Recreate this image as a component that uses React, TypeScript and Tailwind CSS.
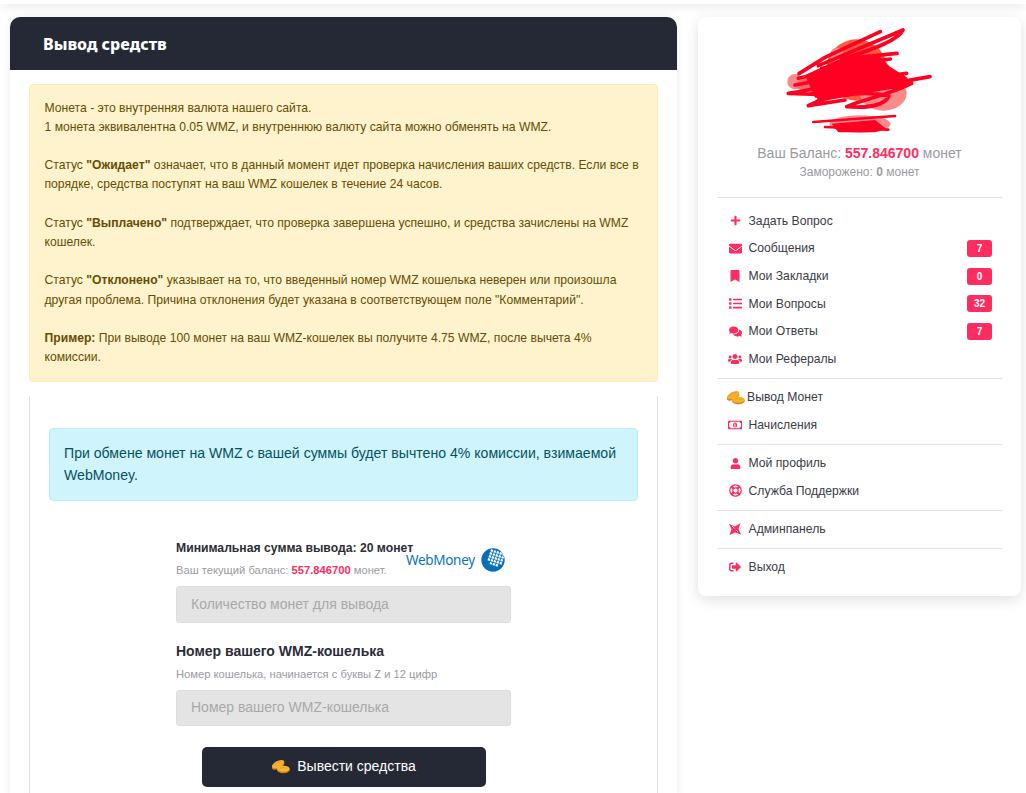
import { FaPlus, FaEnvelope, FaBookmark, FaList, FaComments, FaUsers, FaRegMoneyBillAlt, FaUser, FaRegLifeRing, FaSignOutAlt } from 'react-icons/fa'
import type { ReactNode } from 'react'

const sans = 'font-["Liberation_Sans",Arial,sans-serif]'

const Coins = ({ className }: { className: string }) => (
  <svg viewBox="0 0 20 15" className={className}>
    <ellipse cx="7.5" cy="6.2" rx="7.2" ry="3.6" transform="rotate(-28 7.5 6.2)" fill="#d9820f" />
    <ellipse cx="7.5" cy="5" rx="7" ry="3.4" transform="rotate(-28 7.5 5)" fill="#f7ae2f" />
    <ellipse cx="13" cy="11" rx="6.8" ry="3.6" fill="#d9820f" />
    <ellipse cx="13" cy="9.8" rx="6.6" ry="3.2" fill="#f9b534" />
    <path d="M9 9.6 C11 8.4 15 8.4 17 9.6" fill="none" stroke="#e8951a" strokeWidth="0.8" />
    <path d="M3.5 6 C5 3.8 8 2.2 11 1.8" fill="none" stroke="#e8951a" strokeWidth="0.8" />
  </svg>
)

const AdminIcon = () => (
  <svg viewBox="0 0 12 12" className="h-[12px] w-[12px]">
    <path d="M0 1 L6 3.5 L11.5 0 L9.5 6 L12 11.5 L6 9.5 L0.5 12 L2.5 6 Z" fill="#ff2d5f" />
    <path d="M3 3 L5.5 5.5 M9 9 L6.8 6.8" stroke="#fff" strokeWidth="0.7" />
  </svg>
)

const WebMoneyGlobe = () => {
  const cells = [0, 1, 2, 3, 4]
  return (
    <svg viewBox="0 0 24 24" className="h-[24px] w-[24px]">
      <circle cx="12" cy="12" r="11.7" fill="#0a6fb8" />
      <g transform="rotate(18 13 10)" fill="#fff">
        {cells.map((r) =>
          cells.map((c) =>
            r + c > 7 || (r === 4 && c === 0) ? null : (
              <rect key={`${r}-${c}`} x={7.5 + c * 3.1} y={2.5 + r * 3.1} width="2.3" height="2.3" />
            )
          )
        )}
      </g>
    </svg>
  )
}

// hand scribble hiding the avatar, drawn in a 510x345 box
const Scribble = () => (
  <svg viewBox="0 0 510 345" className="h-[115px] w-[170px]">
    <circle cx="60" cy="170" r="23" fill="#fb8a8a" />
    <circle cx="245" cy="135" r="92" fill="#ff5a3c" />
    <ellipse cx="200" cy="180" rx="140" ry="32" fill="#fb6e6e" />
    <ellipse cx="185" cy="90" rx="20" ry="22" fill="#fb8a8a" />
    <ellipse cx="325" cy="205" rx="70" ry="52" fill="#fb8a8a" />
    <ellipse cx="255" cy="297" rx="92" ry="26" fill="#fb8a8a" />
    <path d="M90 150 L210 95 L310 92 L345 125 L400 160 L300 195 L220 215 L120 218 Z" fill="#ff0022" />
    <path d="M170 296 L300 285 L335 312 L300 322 L190 322 Z" fill="#ff0022" />
    <path
      d="M72 146 L150 97 L316 20 M130 122 L384 15 C370 45 300 72 200 102 L366 85 M140 130 L346 102 M70 160 L300 110 M40 205 C100 195 250 165 395 145 M40 205 L130 208 M60 180 L330 130 M130 215 L465 155 M130 225 L410 175 M100 242 C150 215 250 195 342 212 C330 240 280 250 215 245 C260 225 340 210 410 175 M100 242 L210 225"
      fill="none"
      stroke="#ff0022"
      strokeWidth="11"
      strokeLinecap="round"
      strokeLinejoin="round"
    />
    <path d="M115 291 L360 273 M150 306 L340 314" fill="none" stroke="#ff0022" strokeWidth="8" strokeLinecap="round" />
  </svg>
)

const MenuItem = ({ icon, children, badge }: { icon: ReactNode; children: ReactNode; badge?: number }) => (
  <div className="flex h-[27.7px] items-center text-[12.2px] text-[#3a3b45]">
    <span className="flex w-[31.5px] items-center justify-center pl-[5px] text-[14px] text-[#ff2d5f]">{icon}</span>
    <span className="flex-1">{children}</span>
    {badge !== undefined && (
      <span className="mr-[10px] flex h-[17px] w-[25px] items-center justify-center rounded-[3px] bg-[#ff2d5f] text-[10px] font-bold text-white">
        {badge}
      </span>
    )}
  </div>
)

const Rule = () => <div className="mb-[4.4px] mt-[5px] h-px bg-[#e3e3e3]" />

export default function App() {
  return (
    <div className={`${sans} relative h-[793px] overflow-hidden bg-white`}>
      <div className="h-[4px] shadow-[0_2px_10px_rgba(0,0,0,0.14)]" />
      <div className="flex items-start gap-[21px] pl-[10px] pt-[13px]">
        {/* Main column */}
        <div className="w-[667px] shrink-0 rounded-t-[10px] shadow-[0_0_8px_rgba(0,0,0,0.08)]">
          <div className="flex h-[53px] items-center rounded-t-[10px] bg-[#252935] pl-[33px] pt-[1px] font-['Noto_Sans',sans-serif] text-[16px] font-extrabold text-white">
            Вывод средств
          </div>
          <div className="px-[19px] pt-[14px]">
            <div className="rounded-[4px] border border-[#ffecb5] bg-[#fff3cd] px-[14.5px] py-[13.5px] text-[12.17px] leading-[19.2px] text-[#664d03]">
              <p>Монета - это внутренняя валюта нашего сайта.</p>
              <p>1 монета эквивалентна 0.05 WMZ, и внутреннюю валюту сайта можно обменять на WMZ.</p>
              <br />
              <p>Статус <b>"Ожидает"</b> означает, что в данный момент идет проверка начисления ваших средств. Если все в порядке, средства поступят на ваш WMZ кошелек в течение 24 часов.</p>
              <br />
              <p>Статус <b>"Выплачено"</b> подтверждает, что проверка завершена успешно, и средства зачислены на WMZ кошелек.</p>
              <br />
              <p>Статус <b>"Отклонено"</b> указывает на то, что введенный номер WMZ кошелька неверен или произошла другая проблема. Причина отклонения будет указана в соответствующем поле "Комментарий".</p>
              <br />
              <p><b>Пример:</b> При выводе 100 монет на ваш WMZ-кошелек вы получите 4.75 WMZ, после вычета 4% комиссии.</p>
            </div>
            <div className="mt-[14px] h-[400px] border-x border-[#e0e0e0] px-[19px] pt-[32px]">
              <div className="rounded-[4px] border border-[#b6effb] bg-[#cff4fc] px-[14px] py-[13px] text-[14.1px] leading-[22.4px] text-[#055160]">
                При обмене монет на WMZ с вашей суммы будет вычтено 4% комиссии, взимаемой WebMoney.
              </div>
              <div className="relative mx-auto mt-[38px] w-[335px]">
                <div className="absolute left-[230px] top-[9px] flex items-center gap-[6px]">
                  <span className="mt-[2px] font-['Noto_Sans',sans-serif] text-[13.5px] leading-none tracking-[-0.3px] text-[#0a74c0]">WebMoney</span>
                  <WebMoneyGlobe />
                </div>
                <div className="text-[12.2px] font-bold leading-[18px] text-[#2b2d36]">Минимальная сумма вывода: 20 монет</div>
                <div className="mt-[6px] text-[11.2px] leading-[14px] text-[#9a9aa2]">
                  Ваш текущий баланс: <b className="text-[#ff2d5f]">557.846700</b> монет.
                </div>
                <div className="mt-[9px] flex h-[37px] items-center rounded-[3px] border border-[#dedede] bg-[#e4e4e4] pl-[14px] text-[14px] text-[#a9a9a9]">
                  Количество монет для вывода
                </div>
                <div className="mt-[18px] text-[14px] font-bold leading-[20px] text-[#2b2d36]">Номер вашего WMZ-кошелька</div>
                <div className="mt-[6px] text-[11.2px] leading-[14px] text-[#9a9aa2]">Номер кошелька, начинается с буквы Z и 12 цифр</div>
                <div className="mt-[9px] flex h-[36px] items-center rounded-[3px] border border-[#dedede] bg-[#e4e4e4] pl-[14px] text-[14px] text-[#a9a9a9]">
                  Номер вашего WMZ-кошелька
                </div>
                <div className="mx-auto mt-[21px] flex h-[40px] w-[284px] items-center justify-center gap-[7px] rounded-[5px] bg-[#252935] text-[14px] text-white">
                  <Coins className="h-[15px] w-[19px]" />
                  Вывести средства
                </div>
              </div>
            </div>
          </div>
        </div>

        {/* Sidebar */}
        <div className="w-[323px] shrink-0 rounded-[8px] bg-white px-[19px] pb-[15px] pt-[8px] shadow-[0_4px_14px_rgba(0,0,0,0.12)]">
          <div className="flex justify-center">
            <Scribble />
          </div>
          <div className="mt-[3px] text-center text-[14px] leading-[20px] text-[#9a9aa2]">
            Ваш Баланс: <b className="text-[#ff2d5f]">557.846700</b> монет
          </div>
          <div className="text-center text-[12px] leading-[18px] text-[#9a9aa2]">
            Заморожено: <b>0</b> монет
          </div>
          <div className="mb-[9px] mt-[16px] h-px bg-[#e3e3e3]" />
          <MenuItem icon={<FaPlus className="text-[11px]" />}>Задать Вопрос</MenuItem>
          <MenuItem icon={<FaEnvelope className="text-[13px]" />} badge={7}>Сообщения</MenuItem>
          <MenuItem icon={<FaBookmark className="text-[12px]" />} badge={0}>Мои Закладки</MenuItem>
          <MenuItem icon={<FaList className="text-[13px]" />} badge={32}>Мои Вопросы</MenuItem>
          <MenuItem icon={<FaComments className="text-[13px]" />} badge={7}>Мои Ответы</MenuItem>
          <MenuItem icon={<FaUsers className="text-[14px]" />}>Мои Рефералы</MenuItem>
          <Rule />
          <div className="flex h-[27.7px] items-center pl-[9px] text-[12.2px] text-[#3a3b45]">
            <Coins className="mr-[2px] h-[15px] w-[19px]" />
            Вывод Монет
          </div>
          <MenuItem icon={<FaRegMoneyBillAlt className="text-[14px]" />}>Начисления</MenuItem>
          <Rule />
          <MenuItem icon={<FaUser className="text-[11px]" />}>Мой профиль</MenuItem>
          <MenuItem icon={<FaRegLifeRing className="text-[13px]" />}>Служба Поддержки</MenuItem>
          <Rule />
          <MenuItem icon={<AdminIcon />}>Админпанель</MenuItem>
          <Rule />
          <MenuItem icon={<FaSignOutAlt className="text-[12px]" />}>Выход</MenuItem>
        </div>
      </div>
    </div>
  )
}
